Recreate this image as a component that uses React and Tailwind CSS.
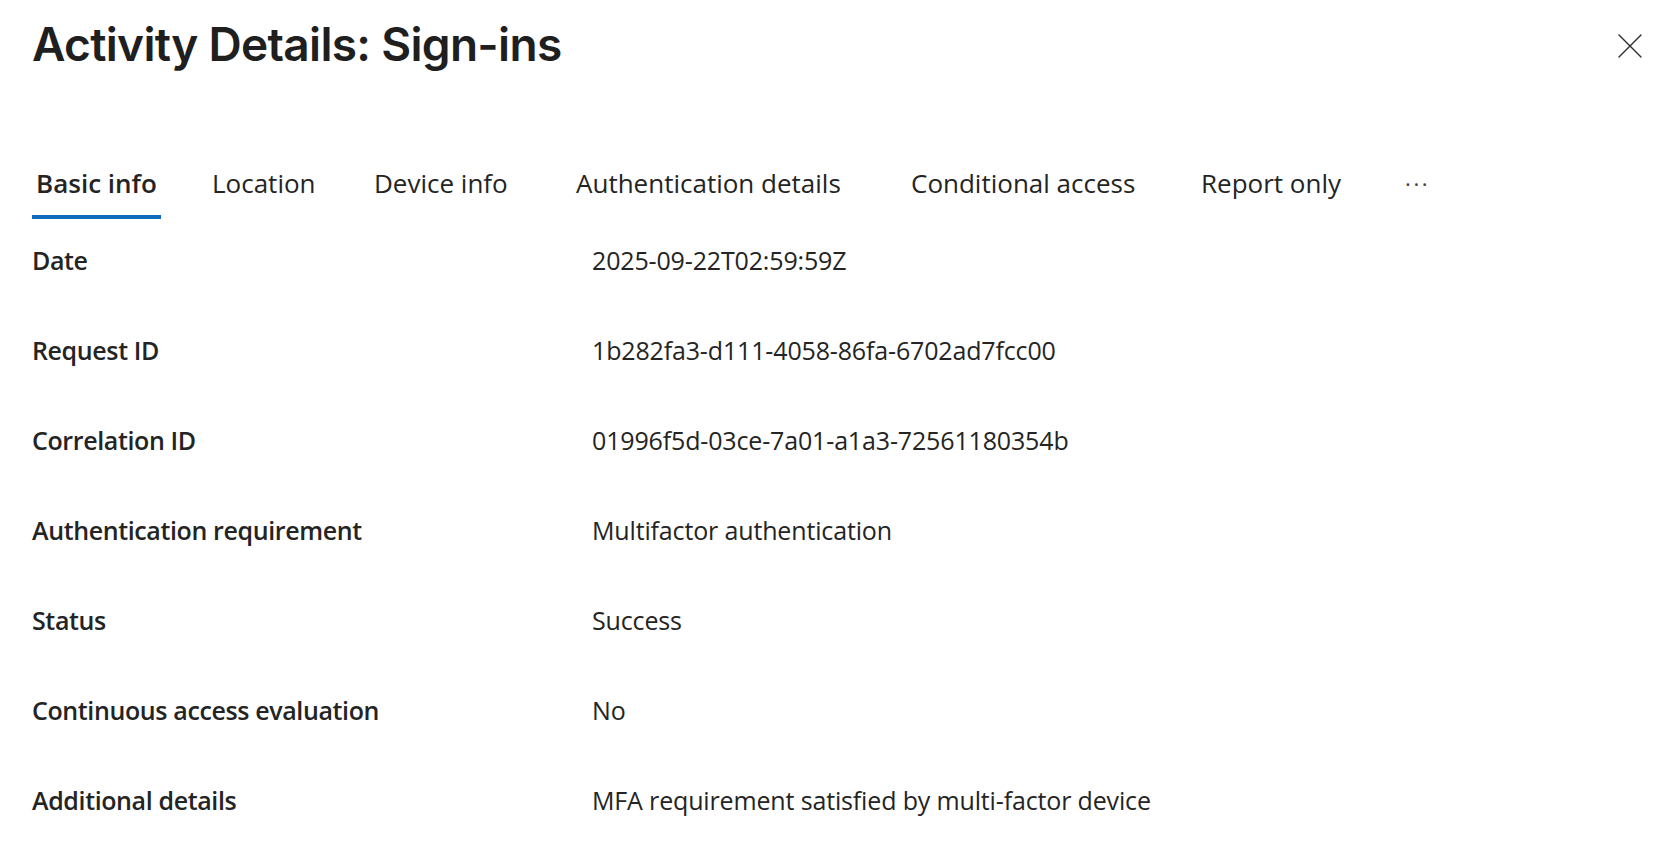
import React from 'react';

const tabs = [
  { label: 'Basic info', w: 'w-[176px]', active: true },
  { label: 'Location', w: 'w-[162px]' },
  { label: 'Device info', w: 'w-[202px]' },
  { label: 'Authentication details', w: 'w-[335px]' },
  { label: 'Conditional access', w: 'w-[290px]' },
  { label: 'Report only', w: 'w-[204px]' },
];

const rows = [
  ['Date', '2025-09-22T02:59:59Z'],
  ['Request ID', '1b282fa3-d111-4058-86fa-6702ad7fcc00'],
  ['Correlation ID', '01996f5d-03ce-7a01-a1a3-72561180354b'],
  ['Authentication requirement', 'Multifactor authentication'],
  ['Status', 'Success'],
  ['Continuous access evaluation', 'No'],
  ['Additional details', 'MFA requirement satisfied by multi-factor device'],
];

function CloseIcon() {
  return (
    <svg width="24" height="24" viewBox="0 0 24 24" fill="none" stroke="#2b2b2b" strokeWidth="1.4" strokeLinecap="round">
      <path d="M1 1 L23 23 M23 1 L1 23" />
    </svg>
  );
}

export default function App() {
  return (
    <div className="w-[1673px] h-[860px] bg-white text-[#242424] font-['Open_Sans',sans-serif] overflow-hidden">
      {/* Header */}
      <div className="flex items-start justify-between pl-8 pr-[31px] pt-4">
        <h1 className="font-['Inter',sans-serif] font-semibold text-[46px] leading-[56px] tracking-[-0.015em] text-[#1f1f1f]">
          Activity Details: Sign-ins
        </h1>
        <button className="mt-[18px]">
          <CloseIcon />
        </button>
      </div>

      {/* Tabs */}
      <div className="flex items-start pl-8 mt-[93px]">
        {tabs.map((t) => (
          <div key={t.label} className={t.w}>
            <span
              className={`inline-block px-1 pb-[14px] text-[26px] leading-[36px] border-b-4 ${
                t.active ? 'border-[#0f6cbd] font-semibold' : 'border-transparent'
              }`}
            >
              {t.label}
            </span>
          </div>
        ))}
        <div className="px-1 text-[22px] leading-[36px] tracking-[0.12em] text-[#424242]">···</div>
      </div>

      {/* Details */}
      <div className="pl-8 mt-6">
        {rows.map(([k, v]) => (
          <div key={k} className="grid grid-cols-[560px_1fr] h-[90px] text-[25px] leading-[34px]">
            <div className="font-semibold tracking-[-0.015em]">{k}</div>
            <div className="tracking-[-0.006em]">{v}</div>
          </div>
        ))}
      </div>
    </div>
  );
}
